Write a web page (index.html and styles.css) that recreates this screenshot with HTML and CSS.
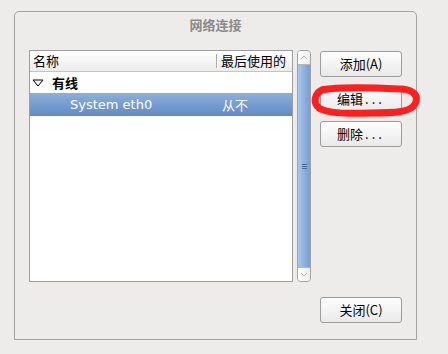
FILE: index.html
```html
<!DOCTYPE html>
<html>
<head>
<meta charset="utf-8">
<link rel="stylesheet" href="styles.css">
</head>
<body>
<div class="frame">
  <div class="title">网络连接</div>
  <div class="main">
    <div class="list">
      <div class="head">
        <div class="hcell">名称</div>
        <div class="hcell sep">最后使用的</div>
      </div>
      <div class="row group">
        <div class="cell">
          <svg class="tri" width="12" height="8" viewBox="0 0 12 8"><polygon points="1,1 11,1 6,7" fill="none" stroke="#000" stroke-width="1"/></svg>
          <b>有线</b>
        </div>
      </div>
      <div class="row sel">
        <div class="cell name">System eth0</div>
        <div class="cell last">从不</div>
      </div>
    </div>
    <div class="scroll">
      <div class="step up"><svg width="8" height="5" viewBox="0 0 8 5"><polyline points="1,4 4,1 7,4" fill="none" stroke="#b8b8b8" stroke-width="1"/></svg></div>
      <div class="thumb"><span class="grip"></span></div>
      <div class="step down"><svg width="8" height="5" viewBox="0 0 8 5"><polyline points="1,1 4,4 7,1" fill="none" stroke="#b8b8b8" stroke-width="1"/></svg></div>
    </div>
    <div class="buttons">
      <button class="btn">添加(A)</button>
      <button class="btn">编辑<span class="dots">...</span></button>
      <button class="btn">删除<span class="dots">...</span></button>
    </div>
  </div>
  <div class="footer">
    <button class="btn">关闭(C)</button>
  </div>
</div>
<svg class="mark" width="448" height="354" viewBox="0 0 448 354">
  <path d="M322 90 C340 86 380 88 402 89 C414 90 419 96 415 104 C411 112 396 113 370 113 C345 114 326 113 319 108 C313 103 314 94 322 90 Z" fill="none" stroke="#ff1f1f" stroke-width="7" stroke-linejoin="round"/>
</svg>
</body>
</html>
```
FILE: styles.css
```css
html, body {
  margin: 0;
  padding: 0;
}
body {
  width: 448px;
  height: 354px;
  background: #edecea;
  font-family: "DejaVu Sans", "Noto Sans CJK SC", sans-serif;
  font-size: 13px;
  color: #000;
  position: relative;
  overflow: hidden;
}
.frame {
  margin: 11px 0 0 14px;
  width: 403px;
  height: 329px;
  box-sizing: border-box;
  border: 1px solid #a4a4a4;
  border-radius: 5px 5px 0 0;
  padding-left: 14px;
}
.title {
  height: 38px;
  box-sizing: border-box;
  padding-top: 5px;
  line-height: 16px;
  text-align: center;
  font-family: "Noto Sans CJK SC", sans-serif;
  font-weight: bold;
  color: #8a8a8a;
  padding-right: 14px;
}
.main {
  display: flex;
  height: 232px;
}
.list {
  width: 264px;
  box-sizing: border-box;
  border: 1px solid #9e9e9e;
  background: #fff;
}
.head {
  display: grid;
  grid-template-columns: 186px 1fr;
  height: 21px;
  box-sizing: border-box;
  border-bottom: 1px solid #c4c4c4;
  background: linear-gradient(#ffffff, #ececec);
}
.hcell {
  line-height: 20px;
  padding-left: 3px;
  font-family: "Noto Sans CJK SC", sans-serif;
  position: relative;
}
.hcell.sep {
  padding-left: 5px;
}
.hcell.sep::before {
  content: "";
  position: absolute;
  left: 0;
  top: 3px;
  height: 14px;
  width: 1px;
  background: #a8a8a8;
  box-shadow: 1px 0 0 #fff;
}
.row {
  display: grid;
  grid-template-columns: 186px 1fr;
}
.row.group {
  height: 21px;
  line-height: 21px;
}
.row.group .cell {
  display: flex;
  align-items: center;
  padding-left: 2px;
}
.tri {
  display: block;
  margin-right: 8px;
}
.row.group b {
  font-family: "Noto Sans CJK SC", sans-serif;
  font-weight: bold;
}
.row.sel {
  height: 23px;
  line-height: 23px;
  background: linear-gradient(#8cafdb, #6389c4);
  color: #fff;
}
.cell.name {
  padding-left: 40px;
}
.cell.last {
  padding-left: 6px;
  font-family: "Noto Sans CJK SC", sans-serif;
}
.scroll {
  margin-left: 4px;
  width: 14px;
  box-sizing: border-box;
  border: 1px solid #a2a2a2;
  border-radius: 4px;
  display: flex;
  flex-direction: column;
  overflow: hidden;
  background: #dcdcdc;
}
.step {
  height: 13px;
  background: linear-gradient(90deg, #ffffff, #ececec);
  display: flex;
  align-items: center;
  justify-content: center;
}
.step.up {
  border-bottom: 1px solid #b5b5b5;
}
.step.down {
  border-top: 1px solid #b5b5b5;
}
.thumb {
  flex: 1;
  background: linear-gradient(90deg, #a9c7ec, #86a9dc 70%, #7a9ed3);
  display: flex;
  align-items: center;
  justify-content: center;
}
.grip {
  width: 5px;
  height: 5px;
  border-top: 1px solid #4a6a99;
  border-bottom: 1px solid #4a6a99;
  position: relative;
  box-sizing: border-box;
}
.grip::after {
  content: "";
  position: absolute;
  left: 0;
  right: 0;
  top: 1px;
  height: 1px;
  background: #4a6a99;
}
.buttons {
  margin-left: 9px;
  padding-top: 1px;
  display: flex;
  flex-direction: column;
  gap: 9px;
}
.btn {
  width: 82px;
  height: 26px;
  box-sizing: border-box;
  border: 1px solid #9c9c9c;
  border-radius: 3px;
  background: linear-gradient(#fefefe, #e9e9e9);
  font-family: "Noto Sans CJK SC", sans-serif;
  font-size: 13px;
  color: #000;
  padding: 0;
  line-height: 22px;
  text-align: center;
}
.dots {
  letter-spacing: 3px;
  margin-left: 2px;
}
.footer {
  margin-top: 15px;
  display: flex;
  justify-content: flex-end;
  padding-right: 14px;
}
.mark {
  position: absolute;
  left: 0;
  top: 0;
  pointer-events: none;
}
```
